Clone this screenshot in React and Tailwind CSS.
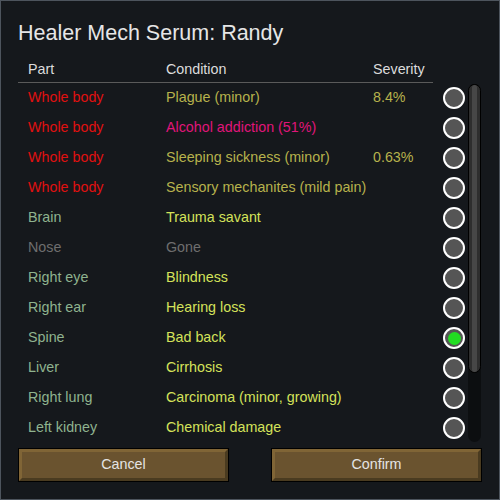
const rows = [
  { part: 'Whole body', partColor: 'text-[#e01010]', cond: 'Plague (minor)', condColor: 'text-[#b7b24c]', sev: '8.4%' },
  { part: 'Whole body', partColor: 'text-[#e01010]', cond: 'Alcohol addiction (51%)', condColor: 'text-[#e0157a]' },
  { part: 'Whole body', partColor: 'text-[#e01010]', cond: 'Sleeping sickness (minor)', condColor: 'text-[#b7b24c]', sev: '0.63%' },
  { part: 'Whole body', partColor: 'text-[#e01010]', cond: 'Sensory mechanites (mild pain)', condColor: 'text-[#b7b24c]' },
  { part: 'Brain', partColor: 'text-[#8fb38f]', cond: 'Trauma savant', condColor: 'text-[#d4e25a]' },
  { part: 'Nose', partColor: 'text-[#6e6e6e]', cond: 'Gone', condColor: 'text-[#6e6e6e]' },
  { part: 'Right eye', partColor: 'text-[#8fb38f]', cond: 'Blindness', condColor: 'text-[#d4e25a]' },
  { part: 'Right ear', partColor: 'text-[#8fb38f]', cond: 'Hearing loss', condColor: 'text-[#d4e25a]' },
  { part: 'Spine', partColor: 'text-[#8fb38f]', cond: 'Bad back', condColor: 'text-[#d4e25a]', checked: true },
  { part: 'Liver', partColor: 'text-[#8fb38f]', cond: 'Cirrhosis', condColor: 'text-[#d4e25a]' },
  { part: 'Right lung', partColor: 'text-[#8fb38f]', cond: 'Carcinoma (minor, growing)', condColor: 'text-[#d4e25a]' },
  { part: 'Left kidney', partColor: 'text-[#8fb38f]', cond: 'Chemical damage', condColor: 'text-[#d4e25a]' },
];

const Radio = ({ checked }) => (
  <div className="w-[22px] h-[22px] rounded-full border-2 border-white bg-[#555555] flex items-center justify-center">
    {checked && <div className="w-[13px] h-[13px] rounded-full bg-[#22dd22]" />}
  </div>
);

const Button = ({ label }) => (
  <div className="w-[211px] h-[34px] bg-black p-px">
    <div className="h-full border-[3px] border-t-[#806536] border-l-[#806536] border-r-[#4a3b20] border-b-[#4a3b20] bg-[#6a532f] flex items-center justify-center text-[14.3px] text-[#e4e4e4]">
      {label}
    </div>
  </div>
);

export default function App() {
  return (
    <div
      className="w-[500px] h-[500px] bg-[#15181c] border border-[#4d545d] flex flex-col px-[17px] pt-[19px]"
      style={{ fontFamily: '"Liberation Sans", Arial, sans-serif' }}
    >
      <h1 className="text-[21.5px] leading-[26px] text-[#e6e6e6]">Healer Mech Serum: Randy</h1>

      <div className="mt-[12px] w-[415px] h-[25px] border-b border-[#5a5a5a] grid grid-cols-[148px_207px_60px] items-center text-[14.3px] text-[#dcdcdc]">
        <span className="pl-[10px]">Part</span>
        <span>Condition</span>
        <span>Severity</span>
      </div>

      <div className="flex gap-[2px]">
        <div className="flex flex-col">
          {rows.map((r, i) => (
            <div key={i} className="h-[30px] grid grid-cols-[148px_207px_60px_22px] items-center text-[14.3px]">
              <span className={`pl-[10px] ${r.partColor}`}>{r.part}</span>
              <span className={`whitespace-nowrap ${r.condColor}`}>{r.cond}</span>
              <span className="text-[#b7b24c]">{r.sev}</span>
              <div className="ml-[10px]">
                <Radio checked={r.checked} />
              </div>
            </div>
          ))}
        </div>
        <div className="ml-[11px] mt-[1px] w-[13px] h-[358px] rounded-full bg-[#0c0e10] flex flex-col">
          <div className="h-[289px] rounded-full border border-black bg-[#2e2e2e] flex justify-center">
            <div className="w-[5px] h-full bg-[#474747] rounded-full" />
          </div>
        </div>
      </div>

      <div className="mt-[5px] flex justify-between">
        <Button label="Cancel" />
        <Button label="Confirm" />
      </div>
    </div>
  );
}
